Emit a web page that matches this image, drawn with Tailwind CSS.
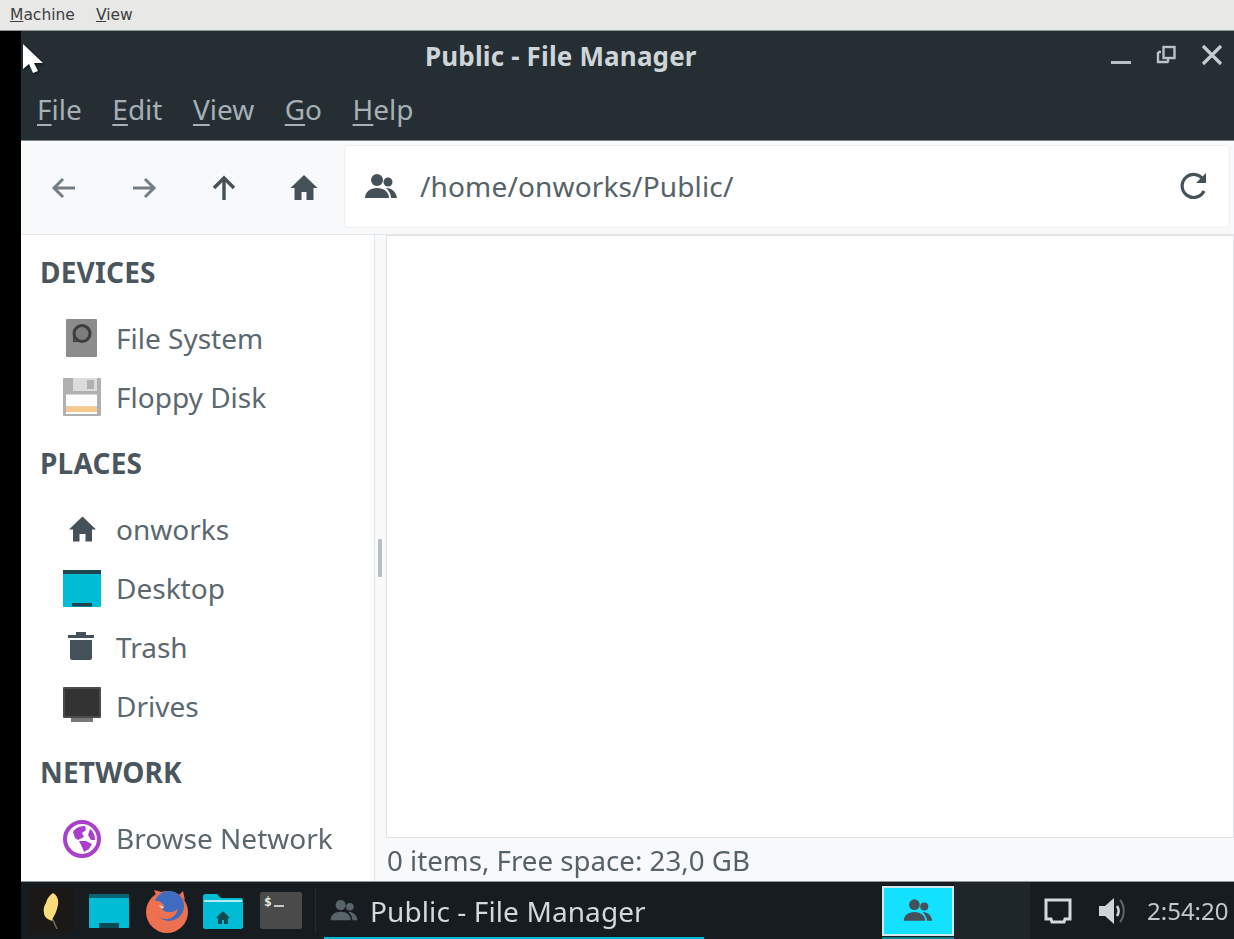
<!DOCTYPE html>
<html lang="en">
  <head>
    <meta charset="UTF-8" />
    <title>Public - File Manager</title>
    <script src="https://cdn.jsdelivr.net/npm/@tailwindcss/browser@4"></script>
  </head>
  <body class="w-[1234px] h-[939px] overflow-hidden bg-black font-['Noto_Sans',sans-serif]">
    <div class="relative flex flex-col w-full h-full blur-[0.6px]">
      <!-- vm menu -->
      <div class="flex items-center gap-[21px] h-[31px] pl-[10px] pt-[2px] bg-[#e8e8e6] border-b border-[#8f9394] text-[15.5px] text-[#3c3f41] font-['DejaVu_Sans',sans-serif]">
        <span><u>M</u>achine</span>
        <span><u>V</u>iew</span>
      </div>

      <div class="flex flex-1 min-h-0">
        <div class="w-[21px] bg-black"></div>
        <div class="flex flex-col flex-1 min-w-0">
          <!-- title bar + menu -->
          <div class="bg-[#242e33] border-b border-[#78848a] h-[110px] text-[#b9c2c6]">
            <div class="relative flex items-center h-[50px] pl-[404px] text-[26px] tracking-[0.15px] font-bold text-[#ced4d7]">
              <span class="leading-none">Public - File Manager</span>
              <div class="absolute right-[10px] top-[12px] flex items-center">
                <svg width="22" height="22" viewBox="0 0 22 22"><rect x="1" y="17" width="20" height="3" fill="#b9c2c6"/></svg>
                <svg class="ml-[24px]" width="22" height="22" viewBox="0 0 22 22" fill="none" stroke="#b9c2c6" stroke-width="2.4"><rect x="7.5" y="3" width="11" height="11"/><path d="M2 8v10h10.500"/><path d="M2 8h3M12 15v3"/></svg>
                <svg class="ml-[22px]" width="24" height="24" viewBox="0 0 24 24" fill="none" stroke="#c6cdd0" stroke-width="3.200"><path d="M3 3l18 18M21 3L3 21"/></svg>
              </div>
            </div>
            <div class="flex items-center gap-[30.5px] h-[59px] pl-[16px] pb-[3px] text-[28px] leading-none text-[#a6b0b5]">
              <span><u class="underline-offset-4">F</u>ile</span>
              <span><u class="underline-offset-4">E</u>dit</span>
              <span><u class="underline-offset-4">V</u>iew</span>
              <span><u class="underline-offset-4">G</u>o</span>
              <span><u class="underline-offset-4">H</u>elp</span>
            </div>
          </div>

          <!-- toolbar -->
          <div class="flex items-center h-[94px] pr-[4px] bg-[#f8f9fb] border-b border-[#e3e5e7]">
            <div class="flex items-center w-[323px] pl-[23px] gap-[40px] shrink-0">
              <svg width="40" height="40" viewBox="0 0 40 40" fill="none" stroke="#737e84" stroke-width="3"><path d="M31 20H10M19 11l-9 9 9 9"/></svg>
              <svg width="40" height="40" viewBox="0 0 40 40" fill="none" stroke="#737e84" stroke-width="3"><path d="M9 20h21M21 11l9 9-9 9"/></svg>
              <svg width="40" height="40" viewBox="0 0 40 40" fill="none" stroke="#455159" stroke-width="3.400"><path d="M20 32V10M10 20L20 10l10 10"/></svg>
              <svg width="40" height="40" viewBox="0 0 40 40" fill="#455159"><path d="M20 7L6.500 20H10.500V32H17.500V24H22.500V32H29.500V20H33.500Z"/></svg>
            </div>
            <div class="flex items-center flex-1 h-[83px] mt-[-2px] pl-[17px] pr-[18px] bg-white border border-[#eceef0] rounded-[4px] text-[28px] tracking-[0.15px] text-[#566269]">
              <svg class="shrink-0" width="38" height="38" viewBox="0 0 38 38" fill="#455159"><circle cx="15" cy="12" r="6"/><circle cx="26" cy="14" r="4.500"/><path d="M3 30c0-6 5-10 12-10s12 4 12 10z"/><path d="M24 20c5 0 10 3 11 10h-6c0-4-2-7-5-10z"/></svg>
              <span class="ml-[20px] flex-1 pb-[2px]">/home/onworks/Public/</span>
              <svg class="mt-[-2px]" width="34" height="34" viewBox="0 0 34 34" fill="none" stroke="#455159" stroke-width="3.200"><path d="M27 22a11.500 11.500 0 1 1-.5-11"/><path d="M29 4V14H19z" fill="#455159" stroke="none"/></svg>
            </div>
          </div>

          <!-- body -->
          <div class="flex flex-1 min-h-0 bg-[#f8f9fb]">
            <aside class="flex flex-col w-[354px] shrink-0 pt-[19px] px-[19px] bg-white border-r border-[#e3e5e7] text-[#5c686f]">
              <h2 class="flex items-center h-[36px] mb-[19px] text-[28px] tracking-[0.2px] font-bold text-[#4a565d]">DEVICES</h2>
              <div class="flex items-center h-[59px] pl-[21px] gap-[15px] text-[28px]">
                <svg width="40" height="40" viewBox="0 0 40 40"><rect x="5" y="0" width="31" height="38" rx="1" fill="#8c8c8c"/><circle cx="21" cy="14.500" r="8" fill="#7d7d7d" stroke="#3e3e3e" stroke-width="3"/><path d="M12 14v9h9v-1.500h-7.500V14z" fill="#3e3e3e"/></svg>
                <span class="pb-[2px]">File System</span>
              </div>
              <div class="flex items-center h-[59px] pl-[21px] gap-[15px] text-[28px]">
                <svg width="40" height="40" viewBox="0 0 40 40"><rect x="2" y="0" width="38" height="38" rx="1" fill="#b0b0b0"/><rect x="12" y="0" width="24" height="13" fill="#dcdcdc"/><rect x="26" y="2" width="7" height="9" fill="#b0b0b0"/><rect x="5" y="16.500" width="31" height="12" fill="#fdfdfd"/><rect x="5" y="28.500" width="31" height="5.500" fill="#f7c88c"/><rect x="5" y="34" width="31" height="2" fill="#fdfdfd"/></svg>
                <span class="pb-[2px]">Floppy Disk</span>
              </div>

              <h2 class="flex items-center h-[36px] mt-[18px] mb-[19px] text-[28px] tracking-[0.2px] font-bold text-[#4a565d]">PLACES</h2>
              <div class="flex items-center h-[59px] pl-[21px] gap-[15px] text-[28px]">
                <svg width="40" height="40" viewBox="0 0 40 40" fill="#455159"><path d="M21.500 6.500L8 19.500H12V31.500H18.500V24H24.500V31.500H31V19.500H35Z"/></svg>
                <span class="pb-[2px]">onworks</span>
              </div>
              <div class="flex items-center h-[59px] pl-[21px] gap-[15px] text-[28px]">
                <svg width="40" height="40" viewBox="0 0 40 40"><rect x="2" y="1" width="38" height="37" rx="1" fill="#00bcd4"/><rect x="2" y="1" width="38" height="4" fill="#1f4650"/><rect x="11" y="34" width="20" height="3.500" fill="#1f4650"/></svg>
                <span class="pb-[2px]">Desktop</span>
              </div>
              <div class="flex items-center h-[59px] pl-[21px] gap-[15px] text-[28px]">
                <svg width="40" height="40" viewBox="0 0 40 40" fill="#455159"><path d="M7 7h8V4h10v3h8v3H7z"/><path d="M9 12h22v18c0 1-1 2-2 2H11c-1 0-2-1-2-2z"/></svg>
                <span class="pb-[2px]">Trash</span>
              </div>
              <div class="flex items-center h-[59px] pl-[21px] gap-[15px] text-[28px]">
                <svg width="40" height="40" viewBox="0 0 40 40"><rect x="2" y="0" width="38" height="31" rx="1" fill="#4c4c4c"/><rect x="4" y="2" width="34" height="27" fill="#333"/><rect x="10" y="31" width="22" height="4" fill="#777"/></svg>
                <span class="pb-[2px]">Drives</span>
              </div>

              <h2 class="flex items-center h-[36px] mt-[18px] mb-[19px] text-[28px] tracking-[0.2px] font-bold text-[#4a565d]">NETWORK</h2>
              <div class="flex items-center h-[59px] pl-[21px] gap-[15px] text-[28px]">
                <svg width="40" height="40" viewBox="0 0 40 40"><circle cx="21" cy="20" r="17" fill="#fff" stroke="#a93fcb" stroke-width="4"/><path d="M12 13C14 9 19 7 24 7L25 11 21 14 23 18 17 21 14 19Z" fill="#a93fcb"/><path d="M18 22H25L31 25 28 30 23 33 21 28Z" fill="#a93fcb"/><path d="M29 10C32 12 34 16 34 21H30L27 16Z" fill="#a93fcb"/></svg>
                <span class="pb-[2px]">Browse Network</span>
              </div>
            </aside>
            <div class="flex items-center justify-center w-[11px] shrink-0">
              <div class="w-[4px] h-[38px] mr-[2px] bg-[#b9bec1] rounded-[1px]"></div>
            </div>
            <main class="flex flex-col flex-1 min-w-0">
              <div class="flex-1 bg-white border border-[#dfe2e4]"></div>
              <div class="flex items-center h-[43px] pl-[1px] pt-[3px] text-[27.7px] text-[#566269]">0 items, Free space: 23,0 GB</div>
            </main>
          </div>
          <div class="h-[1px] bg-[#90989c]"></div>

          <!-- panel -->
          <div class="flex items-stretch h-[57px] bg-[#161c20] text-[#d3d8da]">
            <div class="flex items-center w-[294px] shrink-0 pl-[7px]">
              <div class="flex items-center justify-center w-[46px] h-[45px] bg-[#1b1917]">
                <svg width="26" height="42" viewBox="0 0 26 42"><path d="M15 3c4 2 6 7 5 12-1 4-2 8-4 11-1 2-2 3-1 5-5-1-9-4-9-8-1-4 0-7 2-10 1-5 4-8 7-10z" fill="#fbdb7a"/><path d="M15 30l4 9" stroke="#6f6a5c" stroke-width="1.500"/></svg>
              </div>
              <svg class="ml-[15px]" width="40" height="36" viewBox="0 0 40 36"><rect y="1" width="40" height="34" rx="1" fill="#00bcd4"/><rect y="1" width="40" height="4" fill="#0b6472"/><rect x="10" y="30" width="20" height="5" fill="#0b4c57"/></svg>
              <svg class="ml-[16px]" width="44" height="44" viewBox="0 0 44 44"><circle cx="22" cy="23" r="21" fill="#ed7150"/><path d="M9 1l3 7 8-4z" fill="#ed7150"/><path d="M38 2l2 9-7-4z" fill="#ed7150"/><circle cx="24" cy="17" r="15" fill="#3f6bc0"/><path d="M8 12c3-1 8 0 10 3 2 2 1 4-1 5 2 3 6 3 9 3 3 0 6-2 7-4-1 8-8 12-14 11-7-1-13-9-11-18z" fill="#ed7150"/><path d="M14 16c2 0 4 1 5 3-2 1-4 0-5-3z" fill="#f6c4a8"/></svg>
              <svg class="ml-[14px]" width="40" height="36" viewBox="0 0 40 36"><path d="M0 3c0-1 1-2 2-2h12l4 4h20c1 0 2 1 2 2v27c0 1-1 2-2 2H2c-1 0-2-1-2-2z" fill="#00bcd4"/><rect x="1" y="7" width="38" height="2" fill="#b5eaf2"/><path d="M20 18l-7 7h2v6h4v-4h2v4h4v-6h2z" fill="#0f4a55"/></svg>
              <div class="flex ml-[17px] w-[42px] h-[37px] pl-[4px] bg-[#4a4a4a] rounded-[2px] font-['DejaVu_Sans_Mono',monospace] text-[13px] font-bold leading-[20px] text-[#e8e8e8]">
                <span>$</span>
                <div class="w-[10px] h-[2px] mt-[13px] ml-[2px] bg-[#c8c8c8]"></div>
              </div>
            </div>
            <div class="w-[1px] my-[6px] bg-[#232b30]"></div>
            <div class="w-[8px] shrink-0"></div>
            <div class="relative flex items-center w-[380px] shrink-0 pl-[3px] text-[28px] tracking-[0.1px]">
              <svg width="32" height="32" viewBox="0 0 38 38" class="ml-[1px]" fill="#58636a"><circle cx="15" cy="12" r="6"/><circle cx="26" cy="14" r="4.500"/><path d="M3 30c0-6 5-10 12-10s12 4 12 10z"/><path d="M24 20c5 0 10 3 11 10h-6c0-4-2-7-5-10z"/></svg>
              <span class="ml-[10px] pt-[1px]">Public - File Manager</span>
              <div class="absolute left-0 right-0 bottom-0 h-[2px] bg-[#00bcd4]"></div>
            </div>
            <div class="flex-1"></div>
            <div class="relative flex items-center justify-center w-[72px] h-[50px] mt-[4px] bg-[#12e1ff] border-2 border-[#cfe9ee]">
              <svg width="34" height="34" viewBox="0 0 38 38" fill="#455159"><circle cx="15" cy="12" r="6"/><circle cx="26" cy="14" r="4.500"/><path d="M3 30c0-6 5-10 12-10s12 4 12 10z"/><path d="M24 20c5 0 10 3 11 10h-6c0-4-2-7-5-10z"/></svg>
              <div class="absolute left-[-2px] right-[-2px] bottom-[-5px] h-[2px] bg-[#0f7f8f]"></div>
            </div>
            <div class="w-[76px] bg-[#1f262a] shrink-0"></div>
            <div class="flex items-center w-[204px] shrink-0 pl-[13px]">
              <svg width="30" height="28" viewBox="0 0 30 28" fill="none" stroke="#d5dadc" stroke-width="3"><path d="M3 3h24v19h-5l-1 3H9l-1-3H3z"/></svg>
              <svg class="ml-[25px]" width="30" height="30" viewBox="0 0 30 30"><path d="M1 10h6l9-8v26l-9-8H1z" fill="#cfd4d6"/><path d="M19 10c2 3 2 7 0 10" fill="none" stroke="#cfd4d6" stroke-width="2.500"/><path d="M22 4c5 6 5 16 0 22" fill="none" stroke="#5e676b" stroke-width="2"/></svg>
              <span class="ml-[19px] text-[24px] text-[#c2c8ca]">2:54:20</span>
            </div>
          </div>
        </div>
      </div>

      <!-- pointer -->
      <svg class="absolute left-[21px] top-[42px] drop-shadow-[1px_1px_1px_rgba(0,0,0,0.6)]" width="26" height="36" viewBox="0 0 26 36"><path d="M2 2v25l6-5 4 9 5-2-4-8h9z" fill="#fff"/></svg>
    </div>
  </body>
</html>
